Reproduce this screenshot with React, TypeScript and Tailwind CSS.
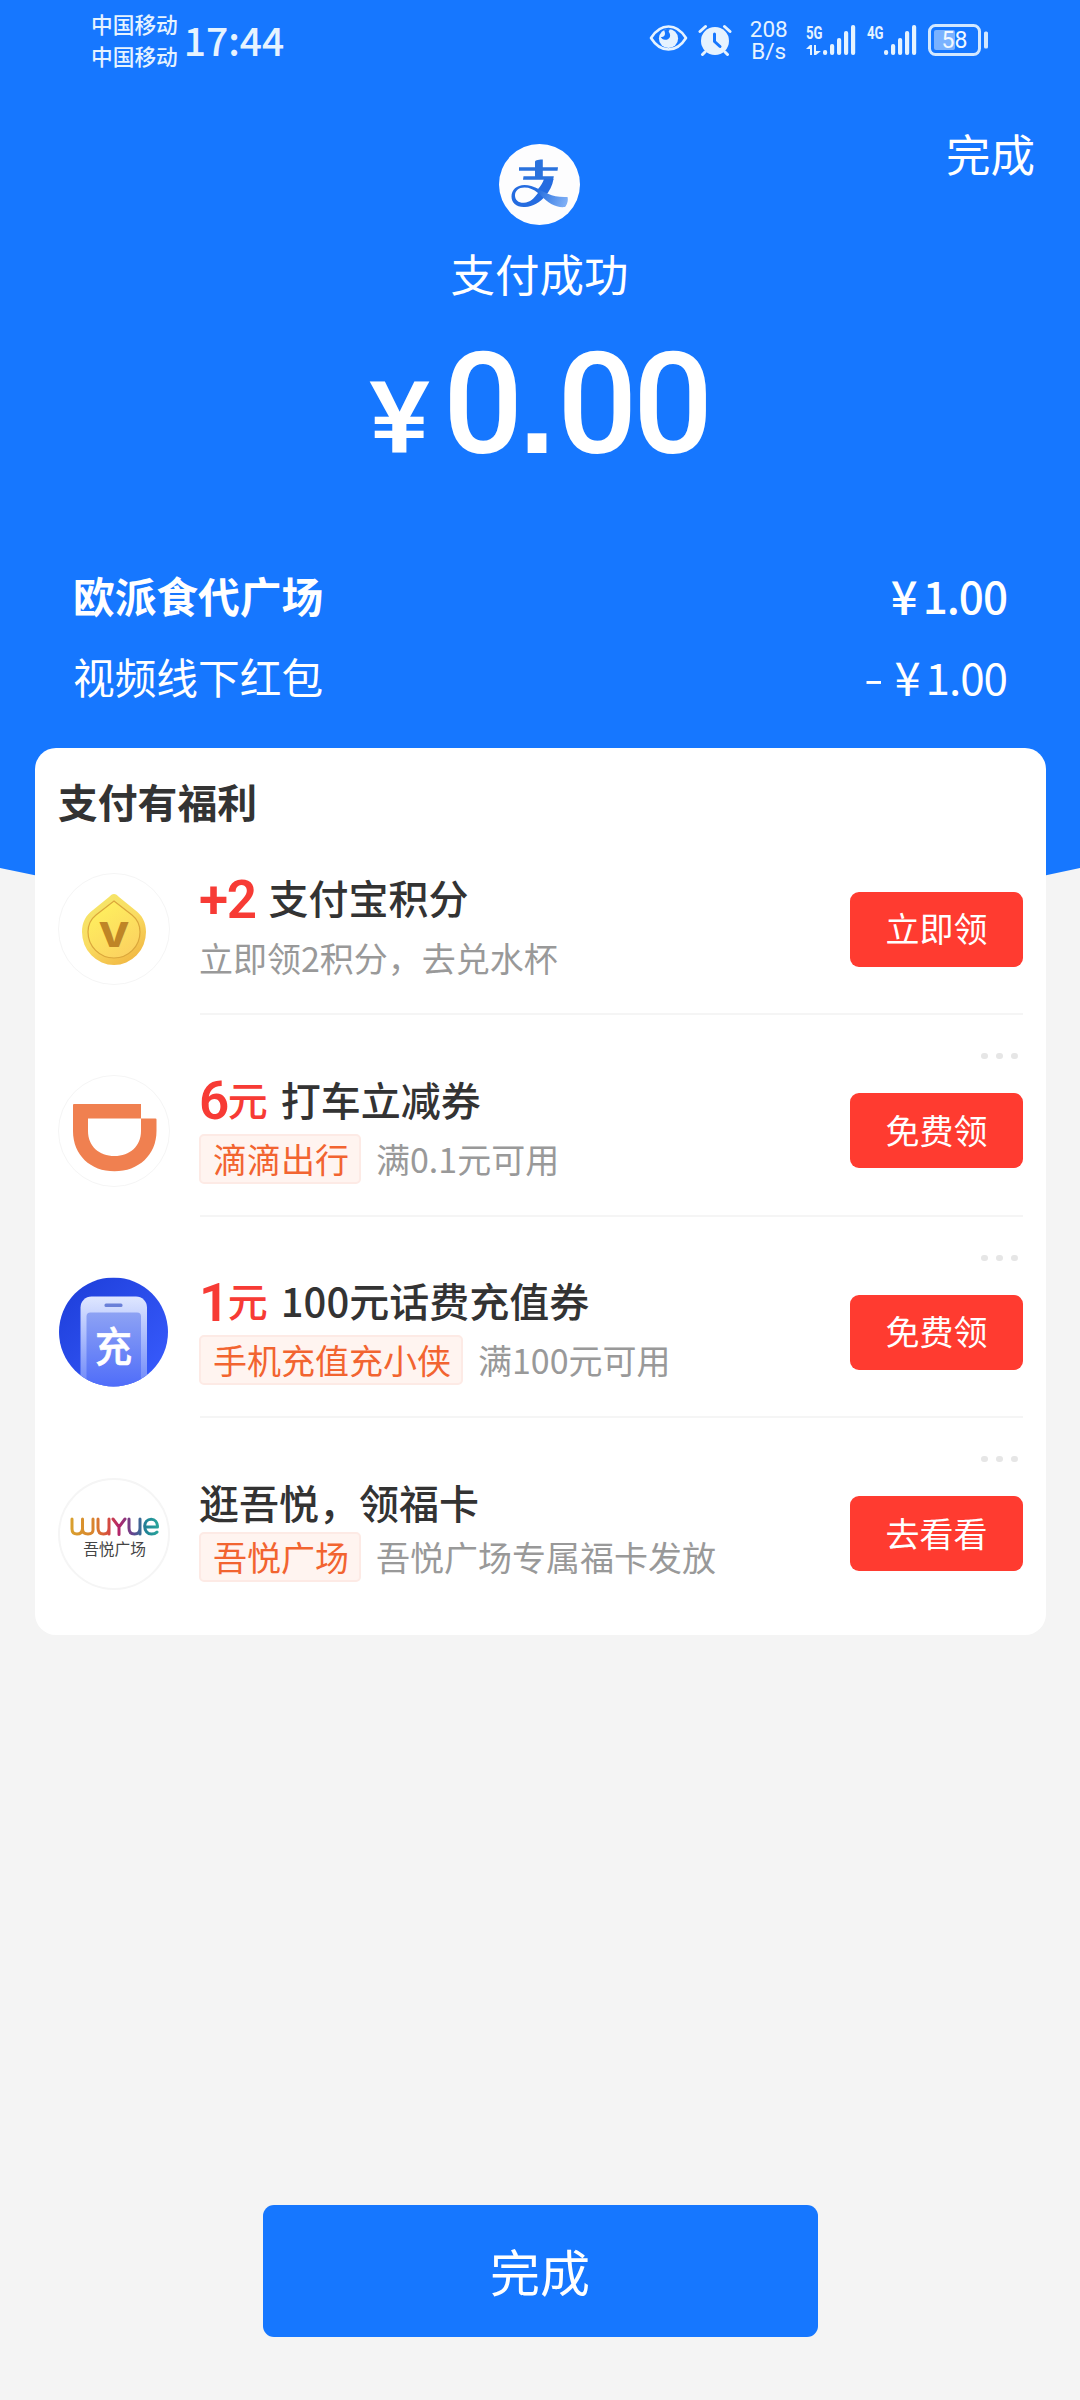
import type { ReactNode } from 'react';

interface Offer {
  id: string;
  icon: ReactNode;
  amount?: string;
  unit?: string;
  title: string;
  tag?: string;
  desc: string;
  action: string;
  subClass: string;
}

function EyeIcon() {
  return (
    <svg width="39" height="28" viewBox="0 0 39 28" fill="none">
      <path d="M2 14C7 6 13 2.5 19.5 2.5S32 6 37 14c-5 8-11 11.5-17.5 11.5S7 22 2 14Z" stroke="#e6f3ff" strokeWidth="2.600" strokeLinejoin="round" />
      <circle cx="19.5" cy="14.500" r="9.6" fill="#e6f3ff" />
      <path d="M15 6.500c2-1.500 4.500-1.800 6.500-.8-2 .5-2.200 2-1 3.300 1.800 3.500-.4 7-4.500 6.800-2-.2-3.500-1.300-4.200-2.800 2.500.5 4.200-1 4.200-3.500 0-1.200-.3-2.200-1-3Z" fill="#1677ff" />
    </svg>
  );
}

function AlarmIcon() {
  return (
    <svg width="34" height="32" viewBox="0 0 34 32" fill="none" strokeLinecap="round">
      <circle cx="17" cy="17" r="14" fill="#e6f3ff" />
      <path d="M2 7.500 7.500 2.500M32 7.500l-5.500-5M7 28l-2.500 2.500M27 28l2.500 2.500" stroke="#e6f3ff" strokeWidth="3" />
      <path d="M16.500 10v7.500l5.500 5" stroke="#1677ff" strokeWidth="3" strokeLinejoin="round" />
    </svg>
  );
}

function Signal({ label, data }: { label: string; data?: boolean }) {
  return (
    <svg className="overflow-visible" width="50" height="32" viewBox="0 0 50 32" fill="#e6f3ff">
      <text x="0" y="14.500" fontSize="17.500" fontWeight="700" fontFamily="Roboto, sans-serif" textLength="16.500" lengthAdjust="spacingAndGlyphs">{label}</text>
      {data && <path d="M0 25l4-4h2v10H4v-6zM8 21h2v6h5l-5 4H8z" />}
      <rect x="17" y="26" width="4.200" height="5" rx="2" />
      <rect x="24" y="20" width="4.200" height="11" rx="2" />
      <rect x="31" y="14" width="4.200" height="17" rx="2" />
      <rect x="38" y="7" width="4.200" height="24" rx="2" />
      <rect x="45" y="1" width="4.200" height="30" rx="2" />
    </svg>
  );
}

function Battery() {
  return (
    <svg width="61" height="32" viewBox="0 0 61 32" fill="none">
      <rect x="1.500" y="1.500" width="50" height="29" rx="6" stroke="#d3e8ff" strokeWidth="3" />
      <rect x="6" y="6" width="21" height="20" rx="2" fill="#7ab2ff" />
      <rect x="56" y="7.500" width="4" height="17" rx="1.500" fill="#d3e8ff" />
      <text x="26.500" y="24" fontSize="23" textAnchor="middle" fill="#f2f9ff" fontFamily="Roboto, sans-serif">58</text>
    </svg>
  );
}

function StatusBar() {
  return (
    <div className="flex h-20 items-start pl-[91px] text-[#e6f3ff]">
      <div className="mt-[8px] text-[21.7px] leading-8 font-medium">
        <div>中国移动</div>
        <div>中国移动</div>
      </div>
      <div className="mt-[19px] ml-[6px] w-[100px] text-[39px] leading-10 font-medium">17:44</div>
      <div className="mt-[24px] ml-[365px] flex">
        <EyeIcon />
        <div className="ml-[10px]">
          <AlarmIcon />
        </div>
        <div className="-mt-[6px] ml-[18px] w-[38px] text-center font-[Roboto] text-[22.5px] leading-[22px]">
          <div>208</div>
          <div>B/s</div>
        </div>
        <div className="ml-[18px]">
          <Signal label="5G" data />
        </div>
        <div className="ml-[11px]">
          <Signal label="4G" />
        </div>
        <div className="ml-[11px]">
          <Battery />
        </div>
      </div>
    </div>
  );
}

function AlipayLogo() {
  return (
    <svg width="81" height="81" viewBox="0 0 81 81" fill="none">
      <defs>
        <linearGradient id="pay-tail" x1="40" y1="48" x2="69" y2="60" gradientUnits="userSpaceOnUse">
          <stop stopColor="#2a72e0" />
          <stop offset="1" stopColor="#86b4f7" />
        </linearGradient>
      </defs>
      <circle cx="40.500" cy="40.500" r="40.500" fill="#fdfdfe" />
      <path d="M20 23.200h39l-.5 3.600H20zM24.500 32.200h30.300l-.6 3.600H24zM36 18c0-1.500 2-2.600 7.800-2.600v17H36z" fill="#2a72dd" />
      <path d="M45 35h9.500c-1 6.500-4 12.500-8.500 17.500-5 5.800-12 10-20 10.500-8.500.5-13.500-4-13.500-10.500 0-6.500 5-11.500 13-11.500 4.500 0 9 1.500 13.500 4 2.800-3 4.800-6.200 6-10ZM25.500 43.500c-6 0-9.500 3.500-9.500 8s3.500 7.500 9 7.300c6-.3 10.500-4.800 14-9.800-4.500-3.600-8.500-5.500-13.500-5.500Z" fill="#256ce0" fillRule="evenodd" />
      <path d="M36 43.500c9 4.500 18 10.500 32.500 9.500 1 3.500-.5 8-2.500 10-9 1-17-4-24-11.500Z" fill="url(#pay-tail)" />
    </svg>
  );
}

function PointsIcon() {
  return (
    <svg width="112" height="112" viewBox="0 0 112 112">
      <defs>
        <linearGradient id="coin" x1="30" y1="20" x2="80" y2="95" gradientUnits="userSpaceOnUse">
          <stop stopColor="#f4e86a" />
          <stop offset=".5" stopColor="#fadc62" />
          <stop offset="1" stopColor="#efb03c" />
        </linearGradient>
        <linearGradient id="coin-face" x1="36" y1="30" x2="74" y2="86" gradientUnits="userSpaceOnUse">
          <stop stopColor="#fff25e" />
          <stop offset="1" stopColor="#fbcf60" />
        </linearGradient>
      </defs>
      <circle cx="56" cy="56" r="55.500" fill="#fff" stroke="#f5f5f5" />
      <path d="M56 21c2 0 3 1 5 3l16 13c7 5 11 12 11 22a32 33 0 0 1-64 0c0-10 4-17 11-22l16-13c2-2 3-3 5-3Z" fill="url(#coin)" />
      <path d="M56 28 74 42c5 4 8 10 8 17a26 26 0 0 1-52 0c0-7 3-13 8-17Z" fill="url(#coin-face)" stroke="#dba73b" strokeWidth="1.200" />
      <text x="56" y="74" fontSize="34" fontWeight="800" textAnchor="middle" textLength="31" lengthAdjust="spacingAndGlyphs" fill="#bf8526" fontFamily="Inter, sans-serif">V</text>
    </svg>
  );
}

function DidiIcon() {
  return (
    <svg width="112" height="112" viewBox="0 0 112 112">
      <circle cx="56" cy="56" r="55.500" fill="#fff" stroke="#f5f5f5" />
      <path d="M16 29h67v14.500H30V56c0 15 11 25 26.500 25S83 71 83 56V43.500h14.500q1 0 1 1V56c0 24-18 40.300-42 40.300S15 80 15 56V30q0-1 1-1Z" fill="#f08050" />
    </svg>
  );
}

function TopUpIcon() {
  return (
    <svg width="112" height="112" viewBox="-1 -1.500 112 112">
      <defs>
        <linearGradient id="topup-bg" x1="0" y1="0" x2="1" y2="1">
          <stop stopColor="#1c3dd8" />
          <stop offset="1" stopColor="#3a5dff" />
        </linearGradient>
        <linearGradient id="topup-phone" x1="0" y1="0" x2="0" y2="1">
          <stop stopColor="#dfe7ff" />
          <stop offset="1" stopColor="#5f7cf8" />
        </linearGradient>
        <linearGradient id="topup-screen" x1="0" y1="0" x2="0" y2="1">
          <stop stopColor="#8da2f4" />
          <stop offset="1" stopColor="#4766fa" />
        </linearGradient>
        <clipPath id="topup-clip">
          <circle cx="54.500" cy="54.500" r="54.500" />
        </clipPath>
      </defs>
      <g clipPath="url(#topup-clip)">
        <rect width="109" height="109" fill="url(#topup-bg)" />
        <rect x="21.500" y="19" width="66.500" height="100" rx="11" fill="url(#topup-phone)" />
        <rect x="27.500" y="35" width="54.500" height="84" rx="4" fill="url(#topup-screen)" />
        <rect x="45.500" y="26" width="18" height="3.500" rx="1.500" fill="#6a80d8" />
        <text x="54.500" y="84.500" fontSize="41" fontWeight="500" textAnchor="middle" textLength="37" lengthAdjust="spacingAndGlyphs" fill="#fff" stroke="#fff" strokeWidth=".6" fontFamily="'Noto Sans CJK SC', sans-serif">充</text>
      </g>
    </svg>
  );
}

function WuyueIcon() {
  return (
    <svg width="112" height="112" viewBox="0 0 112 112">
      <defs>
        <linearGradient id="wuyue" x1="12" y1="0" x2="101" y2="0" gradientUnits="userSpaceOnUse">
          <stop stopColor="#d9a12e" />
          <stop offset=".28" stopColor="#d9822e" />
          <stop offset=".42" stopColor="#d8503c" />
          <stop offset=".55" stopColor="#b3246b" />
          <stop offset=".72" stopColor="#5a4a92" />
          <stop offset=".85" stopColor="#1f8296" />
          <stop offset="1" stopColor="#2aa79b" />
        </linearGradient>
      </defs>
      <circle cx="56" cy="56" r="55" fill="#fff" stroke="#f5f5f5" strokeWidth="2" />
      <g fill="none" stroke="url(#wuyue)" strokeWidth="3" strokeLinecap="round" strokeLinejoin="round">
        <path d="M14 41v10q0 5 5 5t5.500-5v-10M24.500 51q0 5 5.500 5t5-5v-10" />
        <path d="M40 41v9q0 6 5.500 6t5.500-6v-9M51 50v6" />
        <path d="M55 41l6 8 6-8M61 49V56.500" />
        <path d="M71 41v9q0 6 5.500 6t5.500-6v-9M82 50v6" />
        <path d="M87 49H99.500c0-4.500-2.500-7.800-6.300-7.800s-6.500 3-6.500 7.400 3 7.500 6.800 7.500q3.500 0 5.500-2" />
      </g>
      <text x="56.500" y="77" fontSize="15.700" textAnchor="middle" fill="#444" fontFamily="'Noto Sans CJK SC', sans-serif">吾悦广场</text>
    </svg>
  );
}

const OFFERS: Offer[] = [
  { id: 'points', icon: <PointsIcon />, amount: '+2', title: '支付宝积分', desc: '立即领2积分，去兑水杯', action: '立即领', subClass: 'mt-[6px]' },
  { id: 'didi', icon: <DidiIcon />, amount: '6', unit: '元', title: '打车立减券', tag: '滴滴出行', desc: '满0.1元可用', action: '免费领', subClass: 'mt-[5px]' },
  { id: 'topup', icon: <TopUpIcon />, amount: '1', unit: '元', title: '100元话费充值券', tag: '手机充值充小侠', desc: '满100元可用', action: '免费领', subClass: 'mt-[5px]' },
  { id: 'wuyue', icon: <WuyueIcon />, title: '逛吾悦，领福卡', tag: '吾悦广场', desc: '吾悦广场专属福卡发放', action: '去看看', subClass: '' },
];

function MoreDots() {
  return (
    <div className="flex h-[59.5px] justify-end gap-2 pt-[38px] pr-[5px]">
      <span className="h-[6px] w-[7px] rounded-full bg-[#e6e6e6]" />
      <span className="h-[6px] w-[7px] rounded-full bg-[#e6e6e6]" />
      <span className="h-[6px] w-[7px] rounded-full bg-[#e6e6e6]" />
    </div>
  );
}

function OfferRow({ offer }: { offer: Offer }) {
  return (
    <div className="flex h-[112px]">
      <div className="shrink-0">{offer.icon}</div>
      <div className="ml-[29px] flex-1 whitespace-nowrap">
        <div className="flex h-[54px] items-center pb-[6px] text-[40px] leading-[48px] font-medium text-[#333]">
          {offer.amount && (
            <span className="mr-[13px] flex items-center text-[#f73b35]">
              <span className="pt-[5px] font-[Roboto] text-[53px] font-semibold tracking-[-1.5px]">{offer.amount}</span>
              {offer.unit && <span>{offer.unit}</span>}
            </span>
          )}
          <span>{offer.title}</span>
        </div>
        <div className={`flex h-[50px] items-center text-[34px] leading-[50px] text-[#999] ${offer.subClass}`}>
          {offer.tag && (
            <span className="mr-[15px] flex h-[50px] items-center rounded-[5px] border-2 border-[#fdeae5] bg-[#fff4f0] pr-[10px] pl-[12px] text-[#f26430]">
              {offer.tag}
            </span>
          )}
          <span>{offer.desc}</span>
        </div>
      </div>
      <button className="h-[75px] w-[173px] self-center rounded-[9px] bg-[#ff3b30] pb-[2px] text-[34px] leading-none text-white">
        {offer.action}
      </button>
    </div>
  );
}

export default function App() {
  return (
    <div className="relative flex h-[2400px] w-[1080px] flex-col overflow-hidden bg-[#f4f4f4] font-['Noto_Sans_CJK_SC',sans-serif]">
      {/* Blue backdrop with the curved lower edge */}
      <svg className="absolute top-0 left-0" width="1080" height="940" viewBox="0 0 1080 940">
        <path d="M0 0h1080v868Q540 987 0 868Z" fill="#1677ff" />
      </svg>

      <div className="relative text-white">
        <StatusBar />

        <div className="grid h-[145px] grid-cols-[1fr_auto_1fr]">
          <div />
          <div className="pt-16 pr-[2px]">
            <AlipayLogo />
          </div>
          <div className="pt-[43px] pr-[45px] text-right text-[44.5px] leading-[60px]">完成</div>
        </div>
        <div className="mt-[18px] pr-[1px] text-center text-[44.5px] leading-[60px]">支付成功</div>

        <div className="mt-[31px] flex h-[140px] items-baseline pl-[369px] font-[Roboto] leading-none font-medium">
          <span className="w-[74px] origin-left scale-x-115 text-[100px]">¥</span>
          <span className="text-[141px] tracking-[-4.5px]">
            0<span className="font-['Liberation_Sans'] text-[132px] font-bold tracking-[2px]">.</span>00
          </span>
        </div>

        <div className="mt-[91px] flex flex-col gap-[21px] pr-[73px] pl-[73px] text-[41.7px] leading-[60px]">
          <div className="flex justify-between font-bold">
            <span>欧派食代广场</span>
            <span className="flex">
              <span className="mr-[5px] text-[47px] font-medium">¥</span>
              <span className="text-[44px] font-medium tracking-[-1px]">1.00</span>
            </span>
          </div>
          <div className="flex justify-between">
            <span>视频线下红包</span>
            <span className="flex">
              <span className="mr-[11px] origin-right scale-x-135">-</span>
              <span className="mr-[5px] text-[47px]">¥</span>
              <span className="text-[44px] tracking-[-1px]">1.00</span>
            </span>
          </div>
        </div>
      </div>

      <div className="relative mx-[35px] mt-[42px] h-[887px] w-[1011px] rounded-[21px] bg-white px-[23px] pt-[23px]">
        <h2 className="mb-[42px] text-[39.8px] leading-[60px] font-bold text-[#333]">支付有福利</h2>
        {OFFERS.map((offer, i) => (
          <div key={offer.id}>
            {i > 0 && (
              <>
                <div className="mt-[28px] ml-[142px] h-[2px] bg-[#f5f5f5]" />
                <MoreDots />
              </>
            )}
            <OfferRow offer={offer} />
          </div>
        ))}
      </div>

      <div className="mt-auto flex justify-center pb-[63px]">
        <button className="h-[132px] w-[555px] rounded-[11px] bg-[#1677ff] pb-[3px] text-[50px] leading-none text-white">完成</button>
      </div>
    </div>
  );
}
